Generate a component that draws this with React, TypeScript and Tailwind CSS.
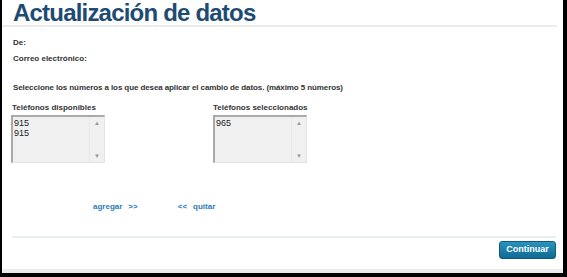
import React from 'react';

const sans = { fontFamily: '"Liberation Sans", Arial, sans-serif' };

function ListBox({ items }: { items: string[] }) {
  return (
    <div className="flex h-[48px] w-[94px] border-t-2 border-l-2 border-r border-b border-t-[#a9a9a9] border-l-[#a9a9a9] border-r-[#e3e3e3] border-b-[#e3e3e3] bg-[#f0f0f0]">
      <div className="flex-1 pl-[1px] pt-[1px] text-[9px] font-normal leading-[10px] text-[#222]">
        {items.map((n, i) => (
          <div key={i}>{n}</div>
        ))}
      </div>
      <div className="flex w-[15px] flex-col items-center justify-between border-l border-[#e9e9e9] py-[3px] text-[6px] font-normal leading-none text-[#999]">
        <span>▲</span>
        <span>▼</span>
      </div>
    </div>
  );
}

export default function App() {
  return (
    <div className="h-[277px] w-[567px] bg-black pl-[2px] pr-[4px] pb-[4px]" style={sans}>
      <div className="flex h-full flex-col bg-white">
        <h1 className="ml-[11px] h-[25px] text-[24px] font-bold leading-[25px] tracking-[-0.8px] text-[#1d4b73]">
          Actualización de datos
        </h1>
        <div className="mr-[6px] h-[2px] bg-[#ececec]" />

        <div className="flex flex-col pl-[11px] text-[8px] font-bold leading-[10px] text-[#333]">
          <p className="mt-[11px]">De:</p>
          <p className="mt-[6px]">Correo electrónico:</p>
          <p className="mt-[19px] tracking-[-0.1px]">
            Seleccione los números a los que desea aplicar el cambio de datos. (máximo 5 números)
          </p>

          <div className="-ml-[2px] mt-[10px] flex">
            <div className="flex w-[202px] flex-col">
              <span className="mb-[2px] pl-[1px]">Teléfonos disponibles</span>
              <ListBox items={['915', '915']} />
            </div>
            <div className="flex flex-col">
              <span className="mb-[2px]">Teléfonos seleccionados</span>
              <ListBox items={['965']} />
            </div>
          </div>

          <div className="mt-[39px] flex text-[#2b7bbd]">
            <span className="ml-[80px]">agregar</span>
            <span className="ml-[6px]">&gt;&gt;</span>
            <span className="ml-[40px]">&lt;&lt;</span>
            <span className="ml-[6px]">quitar</span>
          </div>
        </div>

        <div className="ml-[10px] mr-[7px] mt-[24px] h-[2px] bg-[#e8eef2]" />

        <div className="flex justify-end pr-[7px] pt-[3px]">
          <button className="h-[18px] w-[57px] rounded-[3px] border border-[#0e5a7d] bg-gradient-to-b from-[#2a93bd] to-[#0e6a92] text-[9px] font-bold text-white">
            Continuar
          </button>
        </div>

        <div className="mt-auto h-[4px] bg-[#ececec]" />
      </div>
    </div>
  );
}
